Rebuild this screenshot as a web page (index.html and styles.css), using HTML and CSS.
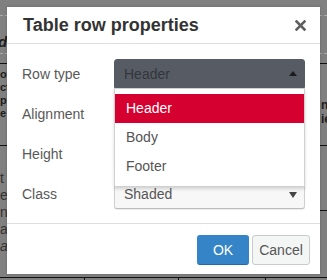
FILE: index.html
```html
<!DOCTYPE html>
<html>
<head>
<meta charset="utf-8">
<link rel="stylesheet" href="styles.css">
</head>
<body>
<div class="page">
  <div class="col col-left">
    <div class="cell c1 dashed"></div>
    <div class="cell c2 dashed"><span class="em">d</span></div>
    <div class="cell c3 solid"></div>
    <div class="cell c4 solid bold">of<br>ct<br>p<br>e</div>
    <div class="cell c5l solid light">t<br>es<br>ns<br>a<br><i>a</i></div>
  </div>
  <div class="col col-right">
    <div class="cell c1 dashed"></div>
    <div class="cell c2 dashed"></div>
    <div class="cell c3 solid"></div>
    <div class="cell c4 solid bold rtext">n<br>ie</div>
    <div class="cell c5 solid"></div>
    <div class="cell c6 solid"></div>
  </div>
  <div class="bottomrow">
    <div class="bc b1"></div><div class="bc b2"></div><div class="bc b3"></div><div class="bc b4"></div>
  </div>
</div>

<div class="modal">
  <div class="hdr">
    <div class="title">Table row properties</div>
    <svg class="close" width="11" height="11" viewBox="0 0 11 11"><path d="M1.5 1.5 L9.5 9.5 M9.5 1.5 L1.5 9.5" stroke="#5f5f5f" stroke-width="2.6" stroke-linecap="square"/></svg>
  </div>
  <div class="body">
    <div class="row">
      <div class="label">Row type</div>
      <div class="field">
        <div class="select open"><span>Header</span><span class="tri up"></span></div>
        <div class="menu">
          <div class="item active">Header</div>
          <div class="item">Body</div>
          <div class="item">Footer</div>
        </div>
      </div>
    </div>
    <div class="row">
      <div class="label">Alignment</div>
      <div class="field"><div class="select"><span></span><span class="tri down"></span></div></div>
    </div>
    <div class="row">
      <div class="label">Height</div>
      <div class="field"><div class="select"><span></span></div></div>
    </div>
    <div class="row">
      <div class="label">Class</div>
      <div class="field"><div class="select"><span>Shaded</span><span class="tri down"></span></div></div>
    </div>
  </div>
  <div class="ftr">
    <button class="btn ok">OK</button>
    <button class="btn cancel">Cancel</button>
  </div>
</div>
</body>
</html>
```

FILE: styles.css
```css
html, body {
  margin: 0;
  padding: 0;
}
body {
  width: 327px;
  height: 280px;
  overflow: hidden;
  background: #808080;
  font-family: "Liberation Sans", Arial, sans-serif;
  position: relative;
}
.page {
  display: grid;
  grid-template-columns: 163px 164px;
  grid-template-rows: 278px 2px;
  width: 327px;
  height: 280px;
}
.col {
  display: flex;
  flex-direction: column;
}
.cell {
  box-sizing: border-box;
  color: #1d1d1d;
  font-size: 13px;
}
.dashed { border-bottom: 1px dashed #a9a9a9; }
.solid { border-bottom: 1px solid #111; }
.c1 { height: 16px; }
.c2 { height: 38px; display: flex; align-items: flex-end; padding-bottom: 3px; }
.c3 { height: 10px; }
.c4 { height: 82px; font-size: 11px; line-height: 13px; padding-top: 4px; }
.c5l { height: 132px; padding-top: 24px; line-height: 17px; }
.c5 { height: 65px; }
.c6 { height: 67px; }
.bold { font-weight: bold; }
.light { color: #333; font-size: 14px; }
.em { font-weight: bold; font-style: italic; font-size: 15px; margin-left: -2px; }
.rtext { padding-left: 158px; padding-top: 34px; font-size: 12px; line-height: 14px; }
.bottomrow {
  grid-column: 1 / 3;
  display: flex;
}
.bc { border-right: 1px solid #111; height: 2px; }
.b1 { width: 84px; }
.b2 { width: 93px; }
.b3 { width: 86px; }
.b4 { flex: 1; border-right: none; }

.modal {
  position: absolute;
  left: 7px;
  top: 7px;
  width: 313px;
  height: 267px;
  background: #fff;
  display: flex;
  flex-direction: column;
  box-shadow: 0 0 3px rgba(0,0,0,0.2);
}
.hdr {
  height: 36px;
  border-bottom: 1px solid #dedede;
  display: flex;
  align-items: center;
  justify-content: space-between;
  padding: 0 14px 0 16px;
}
.title {
  font-size: 18px;
  font-weight: bold;
  color: #333;
  padding-top: 1px;
}
.close { margin-top: 1px; }
.body {
  padding: 15px 15px 0 15px;
  height: 164px;
  display: flex;
  flex-direction: column;
  gap: 10px;
  border-bottom: 1px solid #dedede;
}
.row {
  display: grid;
  grid-template-columns: 92px 191px;
  height: 30px;
  align-items: center;
}
.label {
  font-size: 14px;
  color: #595959;
}
.field {
  position: relative;
  height: 30px;
}
.select {
  box-sizing: border-box;
  height: 30px;
  background: #f7f7f7;
  border: 1px solid #cfcfcf;
  border-bottom-color: #bdbdbd;
  border-radius: 3px;
  box-shadow: 0 1px 1px rgba(0,0,0,0.08);
  display: flex;
  align-items: center;
  justify-content: space-between;
  padding: 0 7px 0 9px;
  font-size: 14px;
  color: #555;
}
.select.open {
  background: #575c64;
  border-color: #575c64;
  color: #33363b;
  border-radius: 3px 3px 0 0;
  height: 29px;
  box-shadow: none;
}
.tri {
  width: 0;
  height: 0;
  border-left: 4px solid transparent;
  border-right: 4px solid transparent;
}
.tri.up { border-bottom: 5px solid #1c1c1c; }
.tri.down { border-top: 6px solid #444; margin-top: 1px; }
.menu {
  position: absolute;
  left: 0;
  top: 29px;
  width: 191px;
  box-sizing: border-box;
  background: #fff;
  border: 1px solid #d0d0d0;
  padding: 5px 0;
  box-shadow: 0 2px 3px rgba(0,0,0,0.15);
  z-index: 2;
}
.item {
  height: 29px;
  line-height: 29px;
  padding-left: 11px;
  font-size: 14px;
  color: #555;
}
.item.active {
  background: #d60030;
  color: #fff;
}
.ftr {
  flex: 1;
  display: flex;
  justify-content: flex-end;
  align-items: flex-start;
  gap: 3px;
  padding: 11px 10px 0 0;
}
.btn {
  font-family: "Liberation Sans", Arial, sans-serif;
  font-size: 14px;
  height: 30px;
  box-sizing: border-box;
  border-radius: 3px;
  margin: 0;
  cursor: pointer;
}
.ok {
  width: 52px;
  background: #3484c7;
  color: #fff;
  border: 1px solid #3484c7;
  border-bottom-color: #236aa6;
}
.cancel {
  width: 58px;
  background: #f4f5f5;
  color: #555;
  border: 1px solid #cbcbcb;
  padding: 0;
}
```
